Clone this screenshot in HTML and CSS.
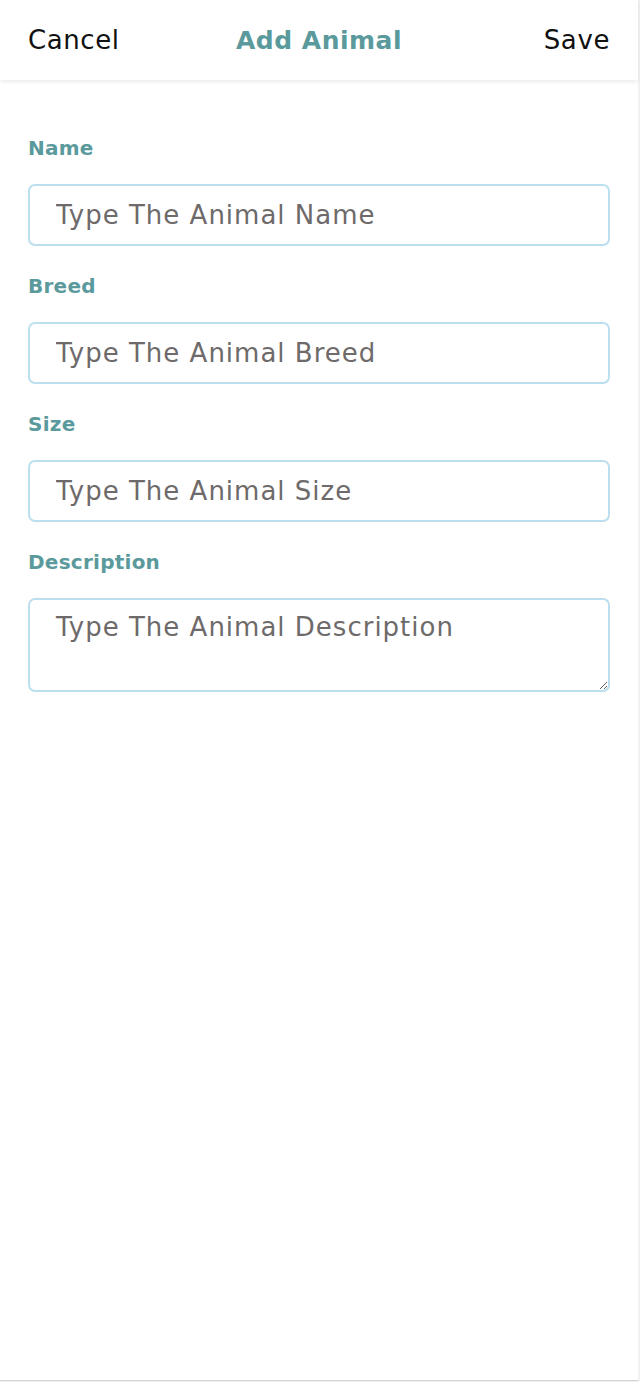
FILE: index.html
```html
<!DOCTYPE html>
<html>
<head>
<meta charset="utf-8">
<link rel="stylesheet" href="styles.css">
</head>
<body>
<div class="frame">
  <header class="topbar">
    <span class="action">Cancel</span>
    <span class="title">Add Animal</span>
    <span class="action action-end">Save</span>
  </header>
  <form class="form">
    <label class="label">Name</label>
    <input class="field" type="text" placeholder="Type The Animal Name">
    <label class="label">Breed</label>
    <input class="field" type="text" placeholder="Type The Animal Breed">
    <label class="label">Size</label>
    <input class="field" type="text" placeholder="Type The Animal Size">
    <label class="label">Description</label>
    <textarea class="field area" placeholder="Type The Animal Description"></textarea>
  </form>
</div>
</body>
</html>
```
FILE: styles.css
```css
html, body {
  margin: 0;
  padding: 0;
  background: #f1f1f1;
}
body {
  font-family: "DejaVu Sans", sans-serif;
  width: 640px;
  height: 1382px;
}
.frame {
  width: 638px;
  height: 1380px;
  background: #fff;
  border-bottom: 1px solid #d2d2d2;
}
.topbar {
  height: 80px;
  display: grid;
  grid-template-columns: 1fr auto 1fr;
  align-items: center;
  padding: 0 28px;
  box-sizing: border-box;
  box-shadow: 0 2px 4px rgba(0,0,0,0.08);
  position: relative;
}
.action {
  font-size: 26px;
  letter-spacing: 0.6px;
  color: #111;
}
.action-end {
  justify-self: end;
}
.title {
  font-size: 25px;
  letter-spacing: 0.5px;
  font-weight: bold;
  color: #5a9a9c;
}
.form {
  display: flex;
  flex-direction: column;
  padding: 56px 28px 0;
}
.label {
  font-size: 20px;
  letter-spacing: 0.25px;
  font-weight: bold;
  color: #5a9a9c;
  line-height: 24px;
  margin-bottom: 24px;
}
.field {
  box-sizing: border-box;
  width: 582px;
  height: 62px;
  border: 2px solid #bcdff0;
  border-radius: 7px;
  padding: 0 26px;
  font-family: inherit;
  font-size: 26px;
  letter-spacing: 1px;
  color: #333;
  margin: 0 0 28px;
  outline: none;
}
.field::placeholder {
  color: #6e6a6a;
}
.area {
  height: 94px;
  padding-top: 12px;
  resize: vertical;
}
```
